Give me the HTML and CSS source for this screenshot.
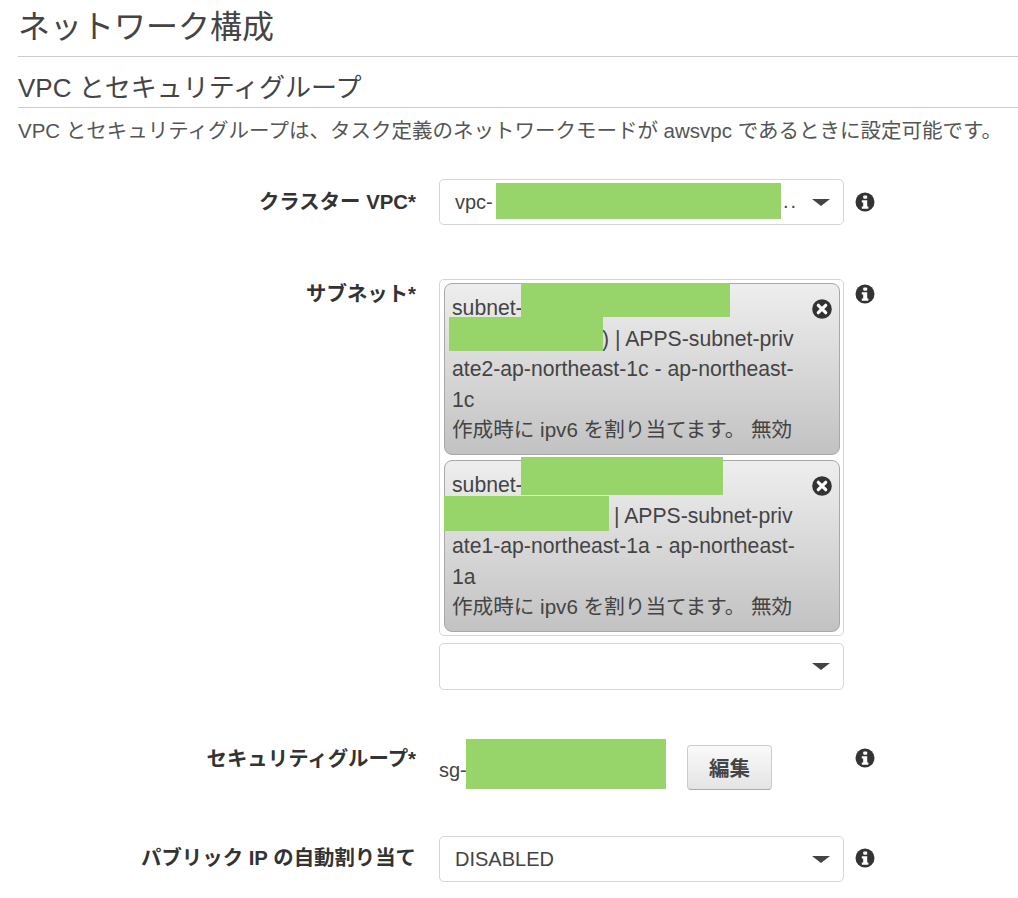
FILE: index.html
```html
<!DOCTYPE html>
<html lang="ja">
<head>
    <meta charset="UTF-8">
    <title>ネットワーク構成</title>
    <link rel="stylesheet" href="styles.css">
</head>
<body>

    <h1>ネットワーク構成</h1>
    <h2>VPC とセキュリティグループ</h2>
    <p class="note">VPC とセキュリティグループは、タスク定義のネットワークモードが awsvpc であるときに設定可能です。</p>

    <div class="row row-vpc">
        <label>クラスター VPC*</label>
        <div class="select">
            <span>vpc-</span>
            <span class="mask mask-vpc"></span>
            <span class="dots">..</span>
            <span class="arrow"></span>
        </div>
        <svg class="info" viewBox="0 0 20 20"><circle cx="10" cy="10" r="9.5" fill="#333"/><rect x="8.2" y="3.4" width="4" height="3.4" rx="1" fill="#fff"/><path d="M6.8 8.2h5.4v6.4h1.2v2.2H6.8v-2.2h1.4v-4.2H6.8z" fill="#fff"/></svg>
    </div>

    <div class="row row-subnet">
        <label>サブネット*</label>
        <div>
            <div class="chips">
                <div class="chip">
                    <span class="mask mask-a1"></span>
                    <span class="mask mask-a2"></span>
                    <svg class="close" viewBox="0 0 20 20"><circle cx="10" cy="10" r="9.8" fill="#333"/><path d="M6.3 6.3l7.4 7.4M13.7 6.3l-7.4 7.4" stroke="#fff" stroke-width="3.2" stroke-linecap="round"/></svg>
                    <div>subnet-</div>
                    <div class="offset-a">)) | APPS-subnet-priv</div>
                    <div>ate2-ap-northeast-1c - ap-northeast-</div>
                    <div>1c</div>
                    <div class="chip-jp">作成時に ipv6 を割り当てます。 無効</div>
                </div>
                <div class="chip">
                    <span class="mask mask-b1"></span>
                    <span class="mask mask-b2"></span>
                    <svg class="close" viewBox="0 0 20 20"><circle cx="10" cy="10" r="9.8" fill="#333"/><path d="M6.3 6.3l7.4 7.4M13.7 6.3l-7.4 7.4" stroke="#fff" stroke-width="3.2" stroke-linecap="round"/></svg>
                    <div>subnet-</div>
                    <div class="offset-b">) | APPS-subnet-priv</div>
                    <div>ate1-ap-northeast-1a - ap-northeast-</div>
                    <div>1a</div>
                    <div class="chip-jp">作成時に ipv6 を割り当てます。 無効</div>
                </div>
            </div>
            <div class="select select-empty"><span class="arrow"></span></div>
        </div>
        <svg class="info" viewBox="0 0 20 20"><circle cx="10" cy="10" r="9.5" fill="#333"/><rect x="8.2" y="3.4" width="4" height="3.4" rx="1" fill="#fff"/><path d="M6.8 8.2h5.4v6.4h1.2v2.2H6.8v-2.2h1.4v-4.2H6.8z" fill="#fff"/></svg>
    </div>

    <div class="row row-sg">
        <label>セキュリティグループ*</label>
        <div class="sg">
            <span class="sg-name">sg-</span>
            <span class="mask-sg"></span>
            <button class="edit">編集</button>
        </div>
        <svg class="info" viewBox="0 0 20 20"><circle cx="10" cy="10" r="9.5" fill="#333"/><rect x="8.2" y="3.4" width="4" height="3.4" rx="1" fill="#fff"/><path d="M6.8 8.2h5.4v6.4h1.2v2.2H6.8v-2.2h1.4v-4.2H6.8z" fill="#fff"/></svg>
    </div>

    <div class="row row-ip">
        <label>パブリック IP の自動割り当て</label>
        <div class="select">
            <span>DISABLED</span>
            <span class="arrow"></span>
        </div>
        <svg class="info" viewBox="0 0 20 20"><circle cx="10" cy="10" r="9.5" fill="#333"/><rect x="8.2" y="3.4" width="4" height="3.4" rx="1" fill="#fff"/><path d="M6.8 8.2h5.4v6.4h1.2v2.2H6.8v-2.2h1.4v-4.2H6.8z" fill="#fff"/></svg>
    </div>

</body>
</html>
```

FILE: styles.css
```css
body {
    margin: 0;
    padding-left: 18px;
    height: 898px;
    overflow: hidden;
    background-color: #fff;
    color: #444;
    font-family: "Liberation Sans", "Noto Sans CJK JP", sans-serif;
    font-size: 20px;
}
h1 {
    margin: 0;
    height: 56px;
    line-height: 55px;
    font-size: 32px;
    font-weight: normal;
    border-bottom: 1px solid #ccc;
    color: #444;
}
h2 {
    margin: 0;
    height: 50px;
    line-height: 62px;
    font-size: 26px;
    font-weight: normal;
    border-bottom: 1px solid #ccc;
    color: #444;
}
.note {
    margin: 0;
    height: 71px;
    font-size: 20.5px;
    line-height: 46px;
    color: #555;
    white-space: nowrap;
}
.row {
    display: grid;
    grid-template-columns: 398px 405px 20px;
    column-gap: 23px;
    align-items: start;
}
.row .info {
    margin-left: -12px;
}
label {
    text-align: right;
    font-size: 20.4px;
    font-weight: bold;
    color: #333;
    white-space: nowrap;
}
.row-vpc {
    margin-bottom: 53px;
}
.row-vpc label {
    line-height: 47px;
}
.row-ip label {
    line-height: 45px;
}
.row-vpc .info {
    margin-top: 13px;
}
.row-ip .info {
    margin-top: 12px;
}
.row-subnet {
    margin-bottom: 49px;
}
.row-subnet label {
    line-height: 30px;
}
.row-subnet .info {
    margin-top: 5px;
}
.row-sg {
    margin-bottom: 45px;
}
.row-sg label {
    padding-top: 7px;
    line-height: 26px;
}
.row-sg .info {
    margin-top: 9px;
}
.select {
    position: relative;
    display: flex;
    align-items: center;
    box-sizing: border-box;
    width: 405px;
    height: 46px;
    padding-left: 15px;
    background-color: #fff;
    border: 1px solid #d5d5d5;
    border-radius: 5px;
}
.select-empty {
    height: 47px;
    margin-top: 7px;
}
.dots {
    position: absolute;
    left: 343px;
    top: 10px;
    letter-spacing: 2px;
}
.arrow {
    position: absolute;
    right: 13px;
    top: 19px;
    border-left: 9px solid transparent;
    border-right: 9px solid transparent;
    border-top: 7px solid #444;
}
.mask {
    position: absolute;
    background-color: #97d56b;
}
.mask-vpc {
    left: 56px;
    top: 3px;
    width: 285px;
    height: 36px;
}
.chips {
    box-sizing: border-box;
    width: 405px;
    height: 357px;
    padding: 3px 3px 0 4px;
    border: 1px solid #d5d5d5;
    border-radius: 5px;
}
.chip {
    position: relative;
    box-sizing: border-box;
    height: 172px;
    margin-bottom: 5px;
    padding: 9px 0 0 7px;
    font-size: 21.2px;
    line-height: 30.5px;
    white-space: nowrap;
    color: #444;
    background: linear-gradient(#eeeeee, #c2c2c2);
    border: 1px solid #a8a8a8;
    border-radius: 8px;
}
.chip-jp {
    font-size: 20.6px;
}
.close {
    position: absolute;
    top: 15px;
    right: 7px;
    width: 20px;
    height: 20px;
}
.offset-a {
    padding-left: 143px;
}
.offset-b {
    padding-left: 149px;
}
.mask-a1 {
    left: 76px;
    top: -1px;
    width: 209px;
    height: 34px;
}
.mask-a2 {
    left: 4px;
    top: 33px;
    width: 154px;
    height: 34px;
}
.mask-b1 {
    left: 76px;
    top: -4px;
    width: 202px;
    height: 38px;
}
.mask-b2 {
    left: -1px;
    top: 35px;
    width: 165px;
    height: 35px;
}
.info {
    display: block;
    width: 20px;
    height: 20px;
}
.sg {
    display: flex;
    align-items: center;
    height: 52px;
}
.sg-name {
    width: 27px;
    padding-top: 10px;
}
.mask-sg {
    width: 200px;
    height: 50px;
    margin-bottom: 2px;
    background-color: #97d56b;
}
.edit {
    width: 85px;
    height: 45px;
    margin: 4px 0 0 21px;
    padding: 0;
    font-family: inherit;
    font-size: 20.5px;
    font-weight: bold;
    color: #444;
    background: linear-gradient(#fafafa, #e4e4e4);
    border: 1px solid #ccc;
    border-bottom-color: #aaa;
    border-radius: 4px;
}
```
